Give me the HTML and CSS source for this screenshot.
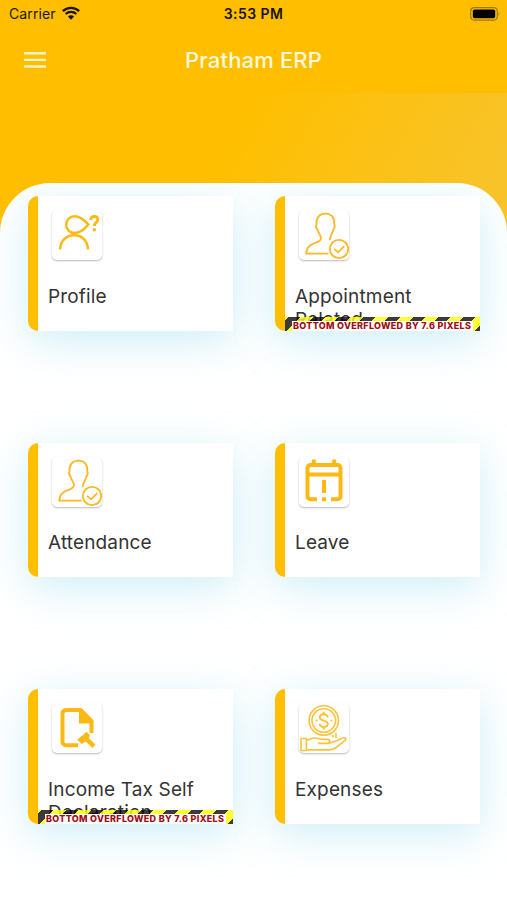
FILE: index.html
```html
<!DOCTYPE html>
<html lang="en">
<head>
    <meta charset="UTF-8">
    <meta name="viewport" content="width=device-width, initial-scale=1.0">
    <title>Pratham ERP</title>
    <link rel="stylesheet" href="styles.css">
</head>
<body>
    <!-- STATUS BAR -->
    <div class="status-bar">
        <div class="carrier">
            <span>Carrier</span>
            <svg width="18" height="14" viewBox="0 0 18 14">
                <path d="M0.9 5.2a11.6 11.6 0 0 1 16.2 0M3.7 8a7.6 7.6 0 0 1 10.6 0" fill="none" stroke="#1a1300" stroke-width="2.4"/>
                <path d="M9 13.7 5.9 10.5a4.4 4.4 0 0 1 6.2 0z" fill="#1a1300"/>
            </svg>
        </div>
        <div class="time">3:53 PM</div>
        <div class="battery">
            <svg width="31" height="14" viewBox="0 0 31 14">
                <rect x="0.7" y="0.7" width="26.6" height="12.4" rx="3.5" fill="none" stroke="#a07800" stroke-width="1.2"/>
                <rect x="2.8" y="2.6" width="22.4" height="8.6" rx="1.6" fill="#000"/>
                <path d="M28.6 4.8q1.8 2.1 0 4.2z" fill="#a07800"/>
            </svg>
        </div>
    </div>

    <!-- HEADER -->
    <header>
        <svg class="menu" width="22" height="16" viewBox="0 0 22 16">
            <path d="M0 1.3h22M0 7.9h22M0 14.5h22" stroke="#fff5cc" stroke-width="2.4"/>
        </svg>
        <h1>Pratham ERP</h1>
    </header>
    <div class="banner"></div>

    <!-- MAIN CONTENT -->
    <main>
        <div class="card">
            <div class="icon">
                <svg width="50" height="50" viewBox="0 0 50 50" fill="none" stroke="#fdb913" stroke-width="2.5">
                    <path d="M36.3 14.6C32 9.5 27.8 6.300 22.5 6.3a8.4 8.4 0 0 0 0 16.8C28 23.1 32.5 19.5 36.3 14.6z"/>
                    <path d="M8 39.3C8.600 30.5 14.5 25.2 22.2 25.2S35.4 30.5 36 39.3"/>
                    <path d="M38.600 10C38.900 7.400 40.400 6.500 42.300 6.500c2.100 0 3.500 1.300 3.500 3.200 0 2.800-3.500 2.900-3.500 6.200" stroke-width="2.8"/>
                    <path d="M42.3 18.300v3" stroke-width="3"/>
                </svg>
            </div>
            <h2>Profile</h2>
        </div>

        <div class="card">
            <div class="icon">
                <svg width="50" height="50" viewBox="0 0 50 50" fill="none" stroke="#fdb827" stroke-width="1.8" stroke-linejoin="round">
                    <path d="M29.5 43.7H7.2c.4-5.5 2.4-8.5 7.8-10.3 4-1.4 7-2.5 7-5.5 0-2.200-2.600-4.500-3.600-8.600-1.400-1.500-1.700-3.400-.9-4.900C17 7.200 20.700 3.600 26.400 3.600s9.400 3.600 8.900 10.800c.8 1.500.5 3.400-.9 4.900-.8 4.200-3.500 6-3.700 11"/>
                    <circle cx="40" cy="39" r="9.2"/>
                    <path d="M35.2 38.8 39 42.3 45.2 36.2"/>
                </svg>
            </div>
            <h2>Appointment Related</h2>
            <div class="overflow"><span>BOTTOM OVERFLOWED BY 7.6 PIXELS</span></div>
        </div>

        <div class="card">
            <div class="icon">
                <svg width="50" height="50" viewBox="0 0 50 50" fill="none" stroke="#fdb827" stroke-width="1.8" stroke-linejoin="round">
                    <path d="M29.5 43.7H7.2c.4-5.5 2.4-8.5 7.8-10.3 4-1.4 7-2.5 7-5.5 0-2.200-2.600-4.500-3.600-8.600-1.400-1.500-1.700-3.400-.9-4.900C17 7.200 20.700 3.600 26.400 3.600s9.400 3.600 8.900 10.800c.8 1.500.5 3.400-.9 4.900-.8 4.200-3.500 6-3.700 11"/>
                    <circle cx="40" cy="39" r="9.2"/>
                    <path d="M35.2 38.8 39 42.3 45.2 36.2"/>
                </svg>
            </div>
            <h2>Attendance</h2>
        </div>

        <div class="card">
            <div class="icon">
                <svg width="50" height="50" viewBox="0 0 50 50" fill="none" stroke="#fdb913" stroke-width="4">
                    <path d="M18 42.2H11.5a3 3 0 0 1-3-3V11a3 3 0 0 1 3-3H38.5a3 3 0 0 1 3 3V39.2a3 3 0 0 1-3 3H32M8.5 17.6H41.5"/>
                    <path d="M14.8 2.5V8M35.2 2.5V8M25 23V36M25 40.2V44.2"/>
                </svg>
            </div>
            <h2>Leave</h2>
        </div>

        <div class="card">
            <div class="icon">
                <svg width="50" height="50" viewBox="0 0 50 50" fill="#fdb913">
                    <path d="M26 42.2H14a3.5 3.5 0 0 1-3.5-3.5V10.5A3.5 3.5 0 0 1 14 7H28.5L39.5 18V30" fill="none" stroke="#fdb913" stroke-width="4"/>
                    <path d="M27 6h3L41 17v3.5H27z"/>
                    <path d="M25.3 36.8 34.7 28.8 38 32.2 36.8 35.2 43.5 41.5 40.5 45 33.8 38.5 29.5 41z"/>
                </svg>
            </div>
            <h2>Income Tax Self Declaration</h2>
            <div class="overflow"><span>BOTTOM OVERFLOWED BY 7.6 PIXELS</span></div>
        </div>

        <div class="card">
            <div class="icon">
                <svg width="50" height="50" viewBox="0 0 50 50" fill="none" stroke="#fdc23a" stroke-width="1.6" stroke-linejoin="round">
                    <circle cx="24.8" cy="17.5" r="14.7"/>
                    <circle cx="24.8" cy="17.5" r="11.8"/>
                    <path d="M28.700 14.200c-.4-2-1.900-2.900-3.900-2.900-2.200 0-3.900 1.200-3.900 3.100 0 4.400 7.900 2 7.900 6.400 0 2-1.700 3.200-4 3.200-2.200 0-3.800-1-4.200-3.100M24.800 8.800v2.500M24.800 24v2.500" stroke-width="2"/>
                    <path d="M16.5 17.5h2M31.300 17.5h2M34 32v2.500M37 30v5"/>
                    <path d="M2 35.5h5.500v12H2zM7.500 37.200c3-.3 4.500-2.200 8-2.200 4 0 5.500 1.400 8.500 1.400h4c3.500 0 3.500 4 0 4H19M29.500 40c5-.3 9.500-2.800 13-4.600 3.500-1.700 6 .2 3 2.500L36.500 45c-2 1.400-4 1.900-6.500 1.900H7.500"/>
                </svg>
            </div>
            <h2>Expenses</h2>
        </div>
    </main>
</body>
</html>
```
FILE: styles.css
```css
/* Global Styles */
* {
    margin: 0;
    padding: 0;
    box-sizing: border-box;
    font-family: Inter, sans-serif;
}

body {
    height: 900px;
    overflow: hidden;
    background-color: #ffbf00;
}

/* Status bar */
.status-bar {
    display: grid;
    grid-template-columns: 1fr auto 1fr;
    align-items: center;
    height: 27px;
    padding: 0 6px 0 9px;
    font-size: 14px;
    color: #1a1300;
}

.carrier {
    display: flex;
    align-items: center;
    gap: 6px;
    letter-spacing: 0.1px;
}

.carrier svg {
    margin-bottom: 2px;
}

.time {
    margin-right: 3px;
    font-weight: 600;
    letter-spacing: 0.45px;
}

.battery {
    display: flex;
    justify-content: flex-end;
}

/* Header */
header {
    display: grid;
    grid-template-columns: 1fr auto 1fr;
    align-items: center;
    height: 66px;
    padding: 0 24px;
}

header h1 {
    font-size: 22px;
    font-weight: 500;
    letter-spacing: 0.15px;
    color: #fff8dc;
}

.banner {
    height: 167px;
    background: linear-gradient(120deg, #ffbf00 42%, #f8c329 90%);
}

/* Main Content Styles */
main {
    display: grid;
    grid-template-columns: 205px 205px;
    grid-auto-rows: 134.5px;
    gap: 112px 42px;
    height: 717px;
    margin-top: -77px;
    padding: 13px 28px 0;
    background-color: #fff;
    border-radius: 50px 50px 0 0;
    overflow: hidden;
}

.card {
    position: relative;
    padding: 14px 10px 0;
    border-left: 10px solid #ffbf00;
    border-radius: 10px 0 0 10px;
    background-color: #fff;
    box-shadow: 0 10px 40px rgba(120, 208, 235, 0.36);
}

.icon {
    width: 50px;
    height: 50px;
    margin-left: 4px;
    border-radius: 5px;
    background-color: #fff;
    box-shadow: 0 1px 2px rgba(0, 0, 0, 0.28);
}

.icon svg {
    display: block;
}

.card h2 {
    height: 56px;
    margin-top: 24.5px;
    font-size: 19px;
    font-weight: 400;
    line-height: 23px;
    letter-spacing: 0.15px;
    color: #333;
}

/* Overflow stripe over the bottom of the card */
.overflow {
    position: absolute;
    left: 0;
    right: 0;
    bottom: 0;
    height: 14px;
    padding-top: 4px;
    background: repeating-linear-gradient(135deg, rgba(255, 255, 0, 0.8) 0, rgba(255, 255, 0, 0.8) 2.5px, rgba(0, 0, 0, 0.77) 2.5px, rgba(0, 0, 0, 0.77) 11px, rgba(255, 255, 0, 0.8) 11px, rgba(255, 255, 0, 0.8) 17.68px);
}

.overflow span {
    display: block;
    width: 181px;
    height: 10px;
    margin: 0 auto;
    padding-left: 1px;
    font-size: 9px;
    font-weight: 800;
    line-height: 10px;
    letter-spacing: 0.31px;
    white-space: nowrap;
    color: #a00d16;
    background-color: #fff;
}
```
